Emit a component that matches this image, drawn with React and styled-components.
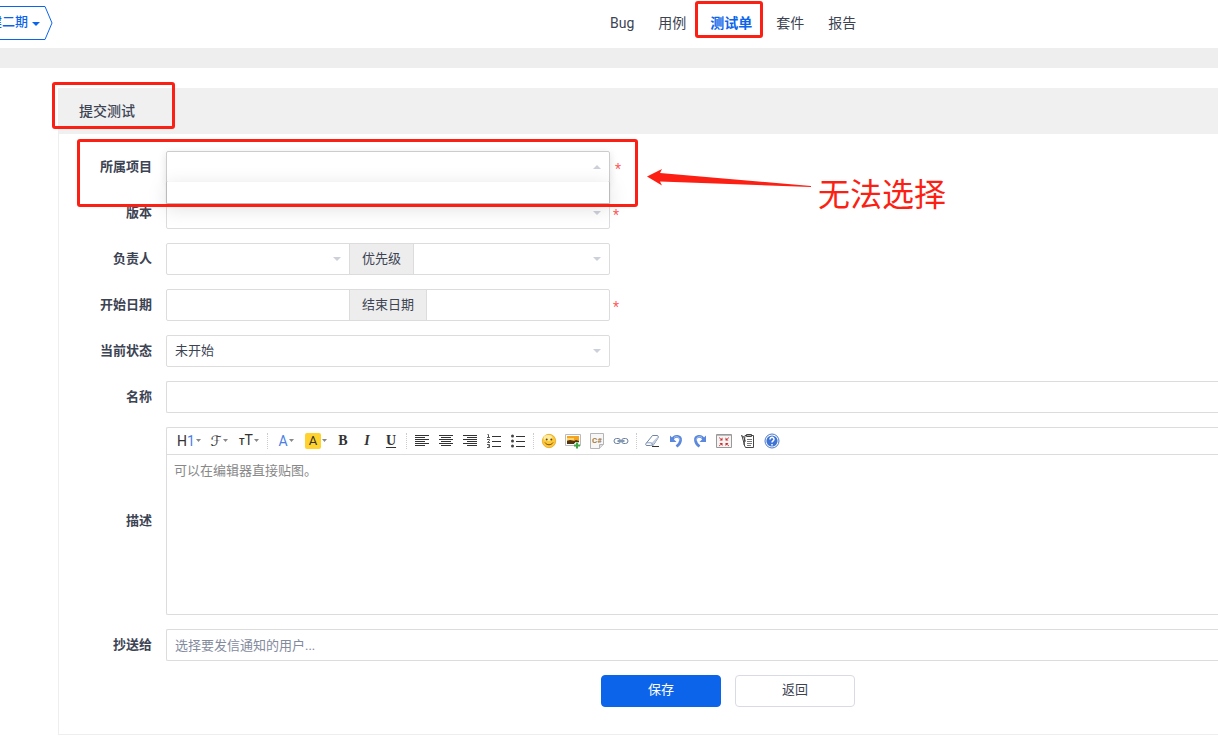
import React from 'react';
import styled, { createGlobalStyle, css } from 'styled-components';

const GlobalStyle = createGlobalStyle`
 * {box-sizing: border-box;}
 body {margin: 0; background: #fff; color: #3c4353; font-size: 13px; line-height: 20px; font-family: Roboto, "Noto Sans CJK SC", sans-serif;}
 button, input, select, textarea {font: inherit; color: inherit;}
`;

const red = '#fc1f13';

/* red marker frame drawn over the part it sits in */
const Mark = styled.span`
 position: absolute;
 top: ${p => p.$top}px;
 right: ${p => p.$right}px;
 bottom: ${p => p.$bottom}px;
 left: ${p => p.$left}px;
 border: 3px solid ${red};
 border-radius: 3px;
 pointer-events: none;
 z-index: 5;
`;

const Header = styled.header`
 display: grid;
 grid-template-columns: 1fr 1fr;
 align-items: center;
 height: 48px;
 overflow: hidden;
`;

const Project = styled.button`
 position: relative;
 display: flex;
 align-items: center;
 justify-content: flex-end;
 gap: 4px;
 width: 53px;
 height: 34px;
 margin-bottom: 2px;
 padding: 0 13px 2px 0;
 border: 0;
 background: none;
 color: #0c64eb;
 font-weight: 500;
 white-space: nowrap;
 overflow: hidden;
 > * {flex: none;}
 > svg:first-child {position: absolute; top: 0; right: 0;}
 > svg:last-child {margin-top: 3px;}
`;

const Nav = styled.nav`
 display: flex;
 gap: 24px;
 padding: 0 0 2px 1px;
 font-size: 14px;
 a {position: relative; color: #3c4353; text-decoration: none;}
 a.active {color: #0c64eb; font-weight: 700;}
`;

const Band = styled.div`
 height: 20px;
 background: #eee;
`;

const Panel = styled.main`
 margin: 20px 0 14px 58px;
 border: 1px solid #eee;
 border-top: 0;
 border-right: 0;
`;

const PanelTitle = styled.div`
 position: relative;
 width: 116px;
 padding: 13px 20px;
 h1 {margin: 0; font-size: 14px; line-height: 20px; font-weight: 500;}
`;

const PanelHead = styled.div`
 background: #f0f0f0;
`;

const Form = styled.form`
 display: flex;
 flex-direction: column;
 gap: 14px;
 padding: 17px 0 27px;
`;

const Row = styled.div`
 position: relative;
 display: grid;
 grid-template-columns: 93px 1fr;
 column-gap: 14px;
 align-items: center;
`;

const Label = styled.label`
 text-align: right;
 font-weight: 700;
`;

const Cell = styled.div`
 display: flex;
 align-items: center;
 gap: 3px;
 min-width: 0;
`;

const Group = styled.div`
 position: relative;
 display: flex;
 width: 100%;
 max-width: 444px;
 border: 1px solid #dcdcdc;
 border-radius: 2px;
 ${p => p.$open && css`box-shadow: 0 2px 8px rgba(0, 0, 0, .12); border-color: #ccc;`}
`;

const control = css`
 width: 100%;
 height: 30px;
 padding: 0 8px;
 border: 0;
 outline: 0;
 background: none;
 appearance: none;
`;

const Select = styled.select`${control}`;
const Input = styled.input`
 ${control}
 &::placeholder {color: #838a9d; opacity: 1;}
`;

const Slot = styled.div`
 position: relative;
 flex: ${p => (p.$first ? '0 0 182px' : '1')};
 ${p => p.$caret && css`
  &::after {
   content: '';
   position: absolute;
   top: 13px;
   right: 8px;
   border: 4px solid transparent;
   pointer-events: none;
   ${p.$caret === 'up' ? 'top: 9px; border-bottom-color: #cbd0db;' : 'border-top-color: #cbd0db;'}
  }
 `}
`;

const Addon = styled.label`
 flex: none;
 padding: 5px 12px;
 border: solid #dcdcdc;
 border-width: 0 1px;
 background: #ededed;
`;

const Drop = styled.ul`
 position: absolute;
 top: 30px;
 left: -1px;
 right: -1px;
 height: 22px;
 margin: 0;
 padding: 0;
 list-style: none;
 background: #fff;
 border: 1px solid #bbb;
 border-top: 0;
 border-radius: 0 0 2px 2px;
 box-shadow: 0 1px 2px rgba(0, 0, 0, .1), 0 4px 20px rgba(0, 0, 0, .13);
 z-index: 3;
`;

const Star = styled.span`
 margin-top: 4px;
 padding-left: ${p => (p.$open ? 2 : 0)}px;
 color: #ff5d5d;
 font-size: 14px;
`;

const Wide = styled.div`
 width: 100%;
 border: 1px solid #dcdcdc;
 border-right: 0;
 border-radius: 2px 0 0 2px;
`;

const Toolbar = styled.div`
 display: flex;
 align-items: center;
 height: 27px;
 padding: 0 0 1px 7px;
 border-bottom: 1px solid #dcdcdc;
`;

const Tool = styled.button`
 display: flex;
 align-items: center;
 justify-content: center;
 gap: 1px;
 flex: none;
 width: ${p => (p.$menu ? 30 : 24)}px;
 height: 24px;
 padding: 0;
 border: 0;
 background: none;
 color: #333;
 line-height: 16px;
 white-space: nowrap;
 i {font-style: normal;}
 .blue {color: #4a7fe8;}
 .head {font-size: 14px;}
 .small {font-size: 9px; font-weight: 700;}
 .script {font-family: "DejaVu Sans", sans-serif; font-size: 14px;}
 .mark {width: 16px; border-radius: 2px; background: #ffd22e;}
 .serif {font-family: "Liberation Serif", serif; font-size: 14px; font-weight: 700;}
 .italic {font-style: italic;}
 .under {text-decoration: underline; text-underline-offset: 2px;}
`;

const Separator = styled.span`
 flex: none;
 width: 1px;
 height: 16px;
 margin: 0 3px;
 border-left: 1px dotted #ccc;
`;

const TextArea = styled.textarea`
 display: block;
 width: 100%;
 height: 159px;
 padding: 6px 7px;
 border: 0;
 outline: 0;
 resize: none;
 background: none;
 &::placeholder {color: #888; opacity: 1;}
`;

const Actions = styled.div`
 display: flex;
 gap: 14px;
 margin-left: 542px;
`;

const Button = styled.button`
 width: 120px;
 height: 32px;
 padding: 0 0 2px;
 border: 1px solid ${p => (p.$primary ? '#0c64eb' : '#d8dbe3')};
 border-radius: 4px;
 background: ${p => (p.$primary ? '#0c64eb' : '#fff')};
 color: ${p => (p.$primary ? '#fff' : '#3c4353')};
`;

const Note = styled.div`
 position: absolute;
 top: 16px;
 left: 587px;
 display: flex;
 color: ${red};
 font-size: 32px;
 line-height: 56px;
 white-space: nowrap;
 z-index: 5;
 svg {flex: none; margin-right: 5px;}
`;

const Caret = () => (
    <svg width="5" height="3" viewBox="0 0 5 3"><path d="M0 0h5L2.5 3z" fill="#888"/></svg>
);

const Icon = ({ children }) => (
    <svg width="16" height="16" viewBox="0 0 16 16" fill="none">{children}</svg>
);

const Lines = ({ d }) => <Icon><path d={d} stroke="#333"/></Icon>;

const icons = {
    left: <Lines d="M1 2.5h14M1 4.5h10M1 6.5h14M1 8.5h10M1 10.5h14M1 12.5h10"/>,
    center: <Lines d="M1 2.5h14M3 4.5h10M1 6.5h14M3 8.5h10M1 10.5h14M3 12.5h10"/>,
    right: <Lines d="M1 2.5h14M5 4.5h10M1 6.5h14M5 8.5h10M1 10.5h14M5 12.5h10"/>,
    ordered: (
        <Icon>
            <path d="M6 3.5h9M6 8.5h9M6 13.5h9" stroke="#333"/>
            <path d="M1.500 1.500h1v3M1 4.500h3M1 6.500h2.500v1L1.500 9.500H4M1 11.500h2.500v3H1M2 13h1.500" stroke="#555"/>
        </Icon>
    ),
    bullets: (
        <Icon>
            <path d="M6 3.5h9M6 8.5h9M6 13.5h9" stroke="#333"/>
            <g fill="#444"><circle cx="2.5" cy="3" r="1.5"/><circle cx="2.5" cy="8" r="1.5"/><circle cx="2.5" cy="13" r="1.5"/></g>
        </Icon>
    ),
    smile: (
        <Icon>
            <circle cx="8" cy="8" r="6.7" fill="#fdc834" stroke="#e5a52b" strokeWidth=".8"/>
            <ellipse cx="7" cy="5" rx="4.5" ry="3" fill="#ffec9a"/>
            <circle cx="5.7" cy="6.5" r="1" fill="#69431a"/><circle cx="10.3" cy="6.5" r="1" fill="#69431a"/>
            <path d="M4 9.5c1.8 3 6.2 3 8 0" stroke="#7c4b16"/>
        </Icon>
    ),
    image: (
        <Icon>
            <path d="M.5 1.5h15v11H.5z" fill="#fff" stroke="#bbb"/>
            <path d="M2 3h12v5H2z" fill="#f5a420"/><path d="M2 5h7v2H2z" fill="#ffd36a"/>
            <path d="M2 8l3-1 4 1 2-1 3 1v3H2z" fill="#4d3514"/>
            <path d="M12 9v6M9 12h6" stroke="#fff" strokeWidth="3.5"/>
            <path d="M12 9.5v6M9 12.5h6" stroke="#3fa745" strokeWidth="2"/>
        </Icon>
    ),
    code: (
        <Icon>
            <path d="M1.5.5h13v11l-4 4h-9z" fill="#f7f7f7" stroke="#b5b5b5"/>
            <path d="M14.5 11.5h-4v4" fill="#ddd" stroke="#b5b5b5"/>
            <text x="3" y="10" fontSize="8" fontWeight="700" fill="#a47c45">C#</text>
        </Icon>
    ),
    link: (
        <Icon>
            <g stroke="#687f9e"><rect x="1" y="5.5" width="6.5" height="5" rx="2.5"/><rect x="8.5" y="5.5" width="6.5" height="5" rx="2.5"/></g>
            <path d="M4.5 8h7" stroke="#8397b2" strokeWidth="2"/>
        </Icon>
    ),
    eraser: (
        <Icon>
            <path d="M8.5 2.5H13c1.5 0 1.5 1.5 1 2.5l-5 7.5H3c-1.500 0-1.500-1-1-2z" fill="#fff" stroke="#6e83a5"/>
            <path d="M8 9.500L13.800 3.500v2L9 12.500H6z" fill="#c3cee0"/><path d="M2 9.800h5.500L9 12.500" stroke="#8fa0bb"/>
            <path d="M8 13.5h7" stroke="#333"/>
        </Icon>
    ),
    undo: (
        <Icon>
            <path d="M4 6.5C7 1.5 13 3 12.5 7.5c-.2 3-2 4.5-4 6" stroke="#5b87dc" strokeWidth="2.8"/>
            <path d="M2 2.5V9h6.5z" fill="#5b87dc"/><path d="M6 4.5c3-2 6 0 5.800 3" stroke="#a6c3f5"/>
        </Icon>
    ),
    redo: (
        <Icon>
            <path d="M12 6.5C9 1.5 3 3 3.5 7.5c.2 3 2 4.5 4 6" stroke="#5b87dc" strokeWidth="2.8"/>
            <path d="M14 2.5V9H7.5z" fill="#5b87dc"/><path d="M10 4.5c-3-2-6 0-5.800 3" stroke="#a6c3f5"/>
        </Icon>
    ),
    full: (
        <Icon>
            <path d="M.5 1.5h15v13H.5z" fill="#f4f4f4" stroke="#999"/><path d="M1 2.5h14" stroke="#bbb"/>
            <path d="M3 4.5l3 2.500M13 4.500L10 7M3 13l3-2.500M13 13l-3-2.500" stroke="#d55" strokeWidth="1"/>
            <path d="M6.500 4.500v3h-3zM9.500 4.500v3h3zM6.500 13v-3h-3zM9.500 13v-3h3z" fill="#cf2b2b"/>
        </Icon>
    ),
    paste: (
        <Icon>
            <path d="M5 2.5h8.500v12h-8l-1.500-3z" fill="#fff" stroke="#444"/>
            <path d="M6.5 1.5h5v2h-5z" fill="#aaa" stroke="#444"/>
            <path d="M7 6.5h5M7 8.5h5M7 10.5h5M7 12.5h4" stroke="#777"/>
            <path d="M1 2.500l2.500 1 2 5M2 3l2.500 9" stroke="#444"/>
        </Icon>
    ),
    help: (
        <Icon>
            <circle cx="8" cy="8" r="7" fill="#fff" stroke="#4a79cc"/><circle cx="8" cy="8" r="5.6" fill="#3f74d4"/>
            <path d="M6 6.5c0-3 4.200-2.700 4 0C9.800 7.800 8 8 8 9.500M8 11v1.500" stroke="#fff" strokeWidth="1.5"/>
        </Icon>
    ),
};

const Tools = ({ names }) => names.map(name => (
    <Tool key={name} type="button" aria-label={name}>{icons[name]}</Tool>
));

export default function App() {
    return (
        <>
    <GlobalStyle/>
    <Header>
        <Project type="button">
            <svg width="53" height="34" viewBox="0 0 53 34" fill="none"><path d="M-1 .5h46l7 16.5-7 16.5H-1" stroke="#0c64eb"/></svg>
            <span>建二期</span>
            <svg width="8" height="4" viewBox="0 0 8 4"><path d="M0 0h8L4 4z" fill="#0c64eb"/></svg>
        </Project>
        <Nav>
            <a href="#bug">Bug</a>
            <a href="#case">用例</a>
            <a href="#task" className="active">测试单<Mark $top={-12} $right={-11} $bottom={-5} $left={-15}/></a>
            <a href="#suite">套件</a>
            <a href="#report">报告</a>
        </Nav>
    </Header>
    <Band/>
    <Panel>
        <PanelHead>
            <PanelTitle>
                <h1>提交测试</h1>
                <Mark $top={-6} $right={0} $bottom={5} $left={-7}/>
            </PanelTitle>
        </PanelHead>
        <Form>
            <Row>
                <Label htmlFor="project">所属项目</Label>
                <Cell>
                    <Group $open>
                        <Slot $caret="up"><Select id="project"/></Slot>
                        <Drop/>
                    </Group>
                    <Star $open>*</Star>
                </Cell>
                <Mark $top={-12} $right={580} $bottom={-24} $left={18}/>
                <Note>
                    <svg width="167" height="40" viewBox="0 0 167 40"><path d="M1 9.5L16 2l-2 4 151 13v1L14 14.5l2 4z" fill={red}/></svg>
                    无法选择
                </Note>
            </Row>
            <Row>
                <Label htmlFor="build">版本</Label>
                <Cell>
                    <Group><Slot $caret="down"><Select id="build"/></Slot></Group>
                    <Star>*</Star>
                </Cell>
            </Row>
            <Row>
                <Label htmlFor="owner">负责人</Label>
                <Cell>
                    <Group>
                        <Slot $first $caret="down"><Select id="owner"/></Slot>
                        <Addon htmlFor="pri">优先级</Addon>
                        <Slot $caret="down"><Select id="pri"/></Slot>
                    </Group>
                </Cell>
            </Row>
            <Row>
                <Label htmlFor="begin">开始日期</Label>
                <Cell>
                    <Group>
                        <Slot $first><Input id="begin"/></Slot>
                        <Addon htmlFor="end">结束日期</Addon>
                        <Slot><Input id="end"/></Slot>
                    </Group>
                    <Star>*</Star>
                </Cell>
            </Row>
            <Row>
                <Label htmlFor="status">当前状态</Label>
                <Cell>
                    <Group><Slot $caret="down"><Select id="status"><option>未开始</option></Select></Slot></Group>
                </Cell>
            </Row>
            <Row>
                <Label htmlFor="name">名称</Label>
                <Wide><Input id="name"/></Wide>
            </Row>
            <Row>
                <Label htmlFor="desc">描述</Label>
                <Wide>
                    <Toolbar>
                        <Tool type="button" $menu><span className="head">H<i className="blue">1</i></span><Caret/></Tool>
                        <Tool type="button" $menu><span className="script">ℱ</span><Caret/></Tool>
                        <Tool type="button" $menu><span className="head"><i className="small">T</i>T</span><Caret/></Tool>
                        <Separator/>
                        <Tool type="button" $menu><span className="head blue">A</span><Caret/></Tool>
                        <Tool type="button" $menu><span className="mark">A</span><Caret/></Tool>
                        <Tool type="button"><span className="serif">B</span></Tool>
                        <Tool type="button"><span className="serif italic">I</span></Tool>
                        <Tool type="button"><span className="serif under">U</span></Tool>
                        <Separator/>
                        <Tools names={['left', 'center', 'right', 'ordered', 'bullets']}/>
                        <Separator/>
                        <Tools names={['smile', 'image', 'code', 'link']}/>
                        <Separator/>
                        <Tools names={['eraser', 'undo', 'redo', 'full', 'paste', 'help']}/>
                    </Toolbar>
                    <TextArea id="desc" placeholder="可以在编辑器直接贴图。"/>
                </Wide>
            </Row>
            <Row>
                <Label htmlFor="mailto">抄送给</Label>
                <Wide><Input id="mailto" placeholder="选择要发信通知的用户..."/></Wide>
            </Row>
            <Actions>
                <Button type="submit" $primary>保存</Button>
                <Button type="button">返回</Button>
            </Actions>
        </Form>
    </Panel>
    </>
    );
}
